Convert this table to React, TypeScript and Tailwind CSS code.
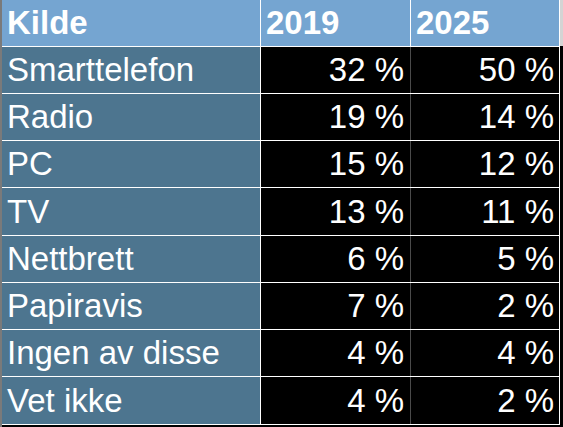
import React from "react";

const rows: [string, string, string, boolean][] = [
  ["Smarttelefon", "32 %", "50 %", false],
  ["Radio", "19 %", "14 %", false],
  ["PC", "15 %", "12 %", false],
  ["TV", "13 %", "11 %", true],
  ["Nettbrett", "6 %", "5 %", false],
  ["Papiravis", "7 %", "2 %", false],
  ["Ingen av disse", "4 %", "4 %", false],
  ["Vet ikke", "4 %", "2 %", true],
];

export default function App() {
  return (
    <div
      className="w-[563px] h-[427px] bg-black flex overflow-hidden text-white"
      style={{ fontFamily: '"Liberation Sans", Arial, sans-serif' }}
    >
      <div className="w-[2px] h-full bg-[#7a7a7a]" />
      <div className="flex flex-col">
        <div className="flex h-[47px] border-b border-white font-bold text-[33px] leading-[46px] bg-[#75a5d1]">
          <div className="w-[259px] border-r border-white pl-[5px]">Kilde</div>
          <div className="w-[150px] border-r border-white pl-[5px]">2019</div>
          <div className="w-[149px] border-r border-white pl-[5px]">2025</div>
        </div>
        {rows.map(([k, a, b, tall]) => (
          <div
            key={k}
            className={`flex text-[33px] border-b border-white ${tall ? "h-[48px] leading-[47px]" : "h-[47px] leading-[46px]"}`}
          >
            <div className="w-[259px] border-r border-white bg-[#4d758f] pl-[5px]">{k}</div>
            <div className="w-[150px] border-r border-[#4a4a4a] text-right pr-[6px] relative">
              {a}
            </div>
            <div className="w-[149px] border-r border-white text-right pr-[5px]">{b}</div>
          </div>
        ))}
      </div>
      <div className="flex-1 flex flex-col">
        <div className="h-[46px] bg-[#d4d4d4]" />
      </div>
    </div>
  );
}
